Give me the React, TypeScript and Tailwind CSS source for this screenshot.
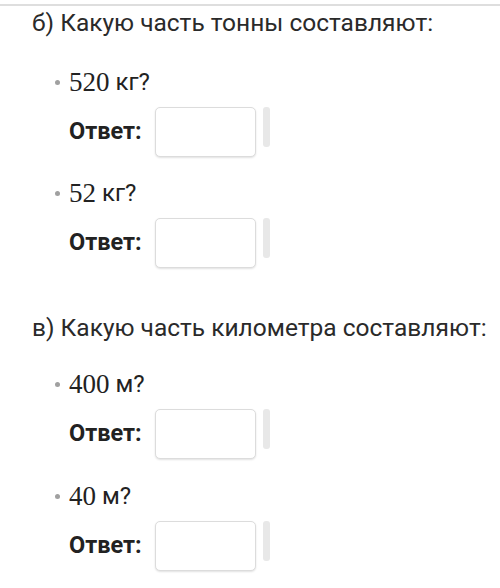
import React from "react";

const sans = { fontFamily: "Roboto, 'Liberation Sans', sans-serif" };

function Item({ num, unit }: { num: string; unit: string }) {
  return (
    <div className="flex flex-col">
      <div className="flex items-center h-[32px] pl-[55px]">
        <span className="w-[5px] h-[5px] rounded-full bg-[#a0a0a0] mr-[9px]" />
        <span
          className="text-[27px] leading-none text-[#222]"
          style={{ fontFamily: "'Liberation Serif', serif" }}
        >
          {num}
        </span>
        <span className="text-[24px] leading-none text-[#222] ml-[6px]" style={sans}>
          {unit}?
        </span>
      </div>
      <div className="flex items-start mt-[9px] pl-[69px]">
        <span
          className="h-[50px] flex items-center text-[23.5px] font-bold text-[#222] w-[86px]"
          style={sans}
        >
          Ответ:
        </span>
        <div className="w-[101px] h-[50px] rounded-[5px] border border-[#dcdcdc] bg-white shadow-[0_1px_2px_rgba(0,0,0,0.12)]" />
        <div className="w-[7px] h-[40px] rounded-[3px] bg-[#e8e8e8] ml-[7px]" />
      </div>
    </div>
  );
}

export default function App() {
  return (
    <div className="w-[500px] h-[588px] bg-white overflow-hidden" style={sans}>
      <div className="mt-[4px] h-[2px] bg-[#dedede]" />
      <div className="mt-[3px] pl-[32px] h-[28px] flex items-center text-[24.5px] text-[#2a2a2a] whitespace-nowrap">
        б) Какую часть тонны составляют:
      </div>
      <div className="mt-[29px]">
        <Item num="520" unit="кг" />
      </div>
      <div className="mt-[20px]">
        <Item num="52" unit="кг" />
      </div>
      <div className="mt-[46px] pl-[32px] h-[28px] flex items-center text-[24.5px] text-[#2a2a2a] whitespace-nowrap">
        в) Какую часть километра составляют:
      </div>
      <div className="mt-[26px]">
        <Item num="400" unit="м" />
      </div>
      <div className="mt-[21px]">
        <Item num="40" unit="м" />
      </div>
    </div>
  );
}
